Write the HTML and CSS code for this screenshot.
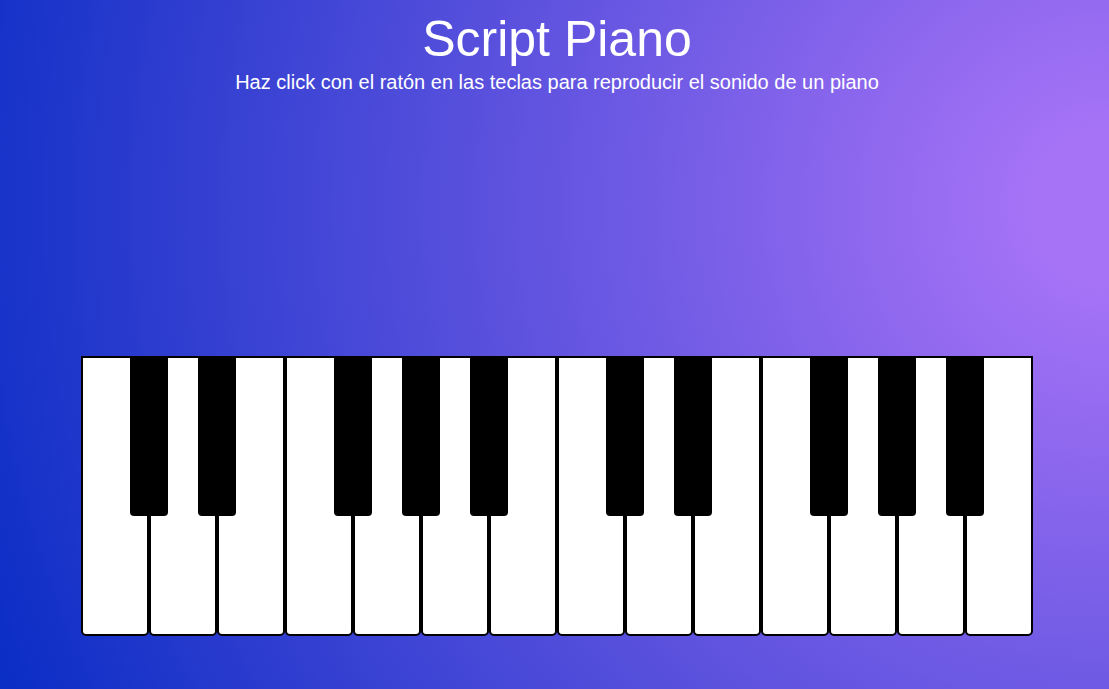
FILE: index.html
```html
<!DOCTYPE html>
<html lang="es">
<head>
<meta charset="utf-8">
<title>Script Piano</title>
<link rel="stylesheet" href="styles.css">
</head>
<body>
<main class="page">
  <header class="header">
    <h1 class="title">Script Piano</h1>
    <p class="subtitle">Haz click con el ratón en las teclas para reproducir el sonido de un piano</p>
  </header>
  <section class="piano">
    <div class="key white"></div>
    <div class="key black"></div>
    <div class="key white"></div>
    <div class="key black"></div>
    <div class="key white"></div>
    <div class="key white"></div>
    <div class="key black"></div>
    <div class="key white"></div>
    <div class="key black"></div>
    <div class="key white"></div>
    <div class="key black"></div>
    <div class="key white"></div>
    <div class="key white"></div>
    <div class="key black"></div>
    <div class="key white"></div>
    <div class="key black"></div>
    <div class="key white"></div>
    <div class="key white"></div>
    <div class="key black"></div>
    <div class="key white"></div>
    <div class="key black"></div>
    <div class="key white"></div>
    <div class="key black"></div>
    <div class="key white"></div>
  </section>
</main>
</body>
</html>
```

FILE: styles.css
```css
html, body {
  margin: 0;
  height: 100%;
}

body {
  background: radial-gradient(circle farthest-corner at 100% 30%, #a673f6 6%, #0a2dc4 100%);
  font-family: "Liberation Sans", Arial, sans-serif;
  color: #ffffff;
  overflow: hidden;
}

.page {
  padding: 11px 0 0 5px;
  display: flex;
  flex-direction: column;
  align-items: center;
}

.header {
  text-align: center;
}

.title {
  margin: 0;
  font-size: 50px;
  font-weight: 400;
  line-height: 57px;
}

.subtitle {
  margin: 3px 0 0;
  font-size: 20px;
  line-height: 23px;
}

.piano {
  margin-top: 262px;
  display: flex;
  align-items: flex-start;
}

.key {
  box-sizing: border-box;
}

.white {
  width: 68px;
  height: 280px;
  background: #ffffff;
  border: 2px solid #000000;
  border-radius: 0 0 5px 5px;
}

.black {
  position: relative;
  z-index: 2;
  width: 38px;
  height: 160px;
  margin: 0 -19px;
  background: #000000;
  border-radius: 0 0 4px 4px;
}
```
